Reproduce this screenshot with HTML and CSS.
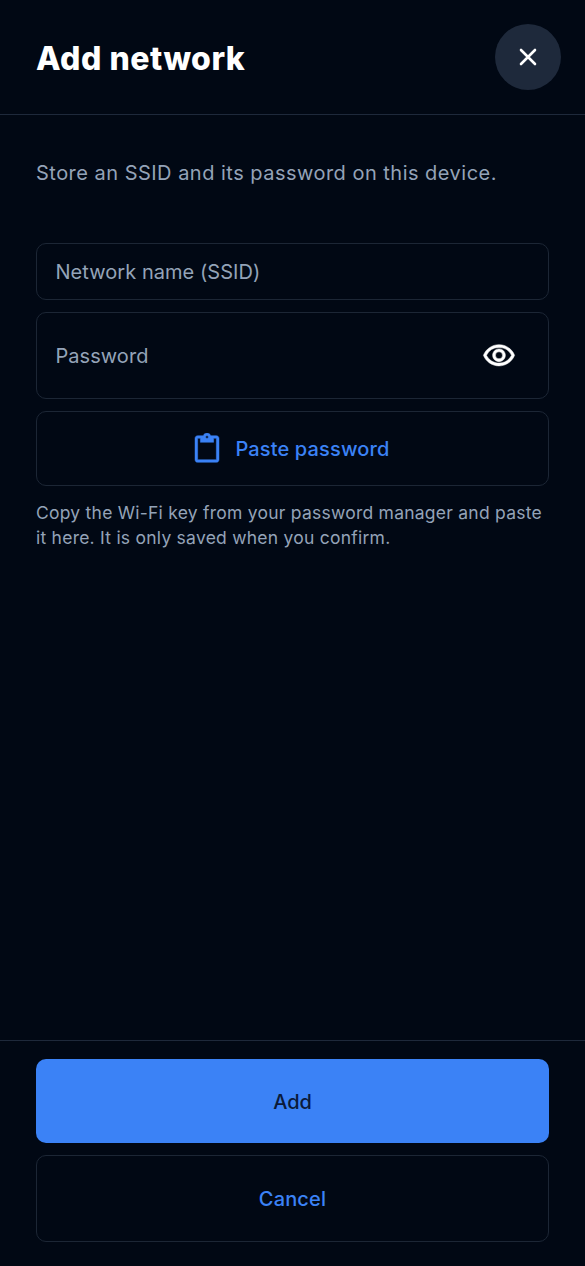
FILE: index.html
```html
<!DOCTYPE html>
<html lang="en">
<head>
  <meta charset="UTF-8">
  <title>Add network</title>
  <link rel="stylesheet" href="styles.css">
</head>
<body>
  <div class="screen">
    <!-- Header -->
    <header class="header">
      <h1>Add network</h1>
      <button class="close-btn" aria-label="Close">
        <svg width="24" height="24" viewBox="0 0 24 24" fill="none" stroke="#fff" stroke-width="2.6" stroke-linecap="round"><path d="M5 5l14 14M19 5L5 19"/></svg>
      </button>
    </header>

    <!-- Form -->
    <main class="content">
      <p class="intro">Store an SSID and its password on this device.</p>
      <div class="field field-name">Network name (SSID)</div>
      <div class="field field-password">
        <span>Password</span>
        <svg class="eye" width="34" height="34" viewBox="0 0 24 24" fill="#fff" stroke="#fff" stroke-width="0.35"><path d="M12 6a9.77 9.77 0 0 1 8.82 5.5C19.17 14.87 15.79 17 12 17s-7.17-2.13-8.82-5.5A9.77 9.77 0 0 1 12 6m0-2C7 4 2.73 7.11 1 11.5 2.73 15.89 7 19 12 19s9.27-3.11 11-7.5C21.27 7.11 17 4 12 4zm0 5a2.5 2.5 0 0 1 0 5 2.5 2.5 0 0 1 0-5m0-2c-2.48 0-4.5 2.02-4.5 4.5S9.52 16 12 16s4.5-2.02 4.5-4.5S14.48 7 12 7z"/></svg>
      </div>
      <button class="btn-outline paste-btn">
        <svg width="32" height="32" viewBox="0 0 24 24" fill="#3b82f6" stroke="#3b82f6" stroke-width="0.35"><path d="M19 2h-4.18C14.4.84 13.3 0 12 0S9.6.84 9.18 2H5c-1.1 0-2 .9-2 2v16c0 1.1.9 2 2 2h14c1.1 0 2-.9 2-2V4c0-1.1-.9-2-2-2zm-7 0c.55 0 1 .45 1 1s-.45 1-1 1-1-.45-1-1 .45-1 1-1zm7 18H5V4h2v3h10V4h2v16z"/></svg>
        Paste password
      </button>
      <p class="help">Copy the Wi-Fi key from your password manager and paste it here. It is only saved when you confirm.</p>
    </main>

    <!-- Actions -->
    <footer class="footer">
      <button class="btn-primary">Add</button>
      <button class="btn-outline cancel-btn">Cancel</button>
    </footer>
  </div>
</body>
</html>
```

FILE: styles.css
```css
* {
  box-sizing: border-box;
}

body {
  margin: 0;
  background: #010814;
  font-family: Inter, "Liberation Sans", sans-serif;
  color: #94a3b8;
}

button {
  font-family: inherit;
  cursor: pointer;
}

.screen {
  height: 1266px;
  display: flex;
  flex-direction: column;
}

.header {
  height: 115px;
  padding: 24px 24px 0 36px;
  display: flex;
  justify-content: space-between;
  align-items: flex-start;
  border-bottom: 1px solid #1e293b;
}

.header h1 {
  margin: 15px 0 0;
  font-size: 32px;
  line-height: 40px;
  font-weight: 800;
  letter-spacing: 0.5px;
  color: #fff;
}

.close-btn {
  width: 66px;
  height: 66px;
  border: none;
  border-radius: 50%;
  background: #1e293b;
  display: flex;
  align-items: center;
  justify-content: center;
  padding: 0;
}

.content {
  flex: 1;
  padding: 46px 36px 0;
}

.intro {
  margin: 0 0 57px;
  font-size: 20px;
  line-height: 25px;
  letter-spacing: 0.48px;
}

.field {
  border: 1.5px solid #1c2635;
  border-radius: 10px;
  padding: 0 18.5px;
  font-size: 20px;
  letter-spacing: 0.05px;
  display: flex;
  align-items: center;
  justify-content: space-between;
}

.field-name {
  height: 57px;
  margin-bottom: 12px;
}

.field-password {
  height: 87px;
  margin-bottom: 12px;
}

.eye {
  margin-right: 14px;
}

.btn-outline {
  width: 100%;
  background: transparent;
  border: 1.5px solid #1c2635;
  border-radius: 10px;
  color: #3b82f6;
  font-size: 20px;
  font-weight: 550;
  letter-spacing: 0.15px;
  display: flex;
  align-items: center;
  justify-content: center;
}

.paste-btn {
  height: 75px;
  gap: 12px;
  padding: 0 10px 0 6px;
}

.help {
  margin: 14px 0 0;
  font-size: 17.5px;
  line-height: 25px;
  letter-spacing: 0.24px;
}

.footer {
  padding: 18px 36px 24px;
  margin-top: -1px;
  border-top: 1px solid #1e293b;
  display: flex;
  flex-direction: column;
  gap: 12px;
}

.btn-primary {
  height: 84px;
  padding-top: 2px;
  border: none;
  border-radius: 10px;
  background: #3b82f6;
  color: #0a1a3a;
  font-size: 20px;
  font-weight: 550;
}

.cancel-btn {
  height: 87px;
}
```
